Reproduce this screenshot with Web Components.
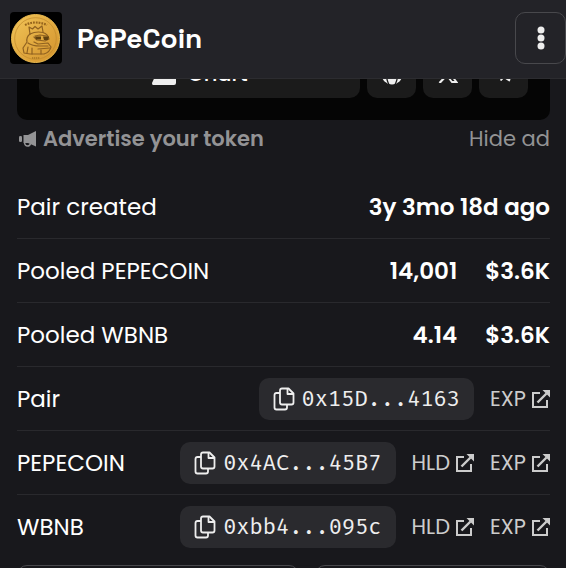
<!DOCTYPE html>
<html lang="en">
<head>
<meta charset="utf-8">
<meta name="viewport" content="width=device-width, initial-scale=1">
<title>PePeCoin</title>
<style>
    html{
        background:#18181c;
    }
    body{
        margin:0;
        color:#fff;
        font-family:Poppins, Inter, sans-serif;
        font-size:23px;
        line-height:32px;
    }
</style>
</head>
<body>
<pair-page>
    <token-header slot="header">PePeCoin</token-header>
    <ad-banner>Chart</ad-banner>
    <ad-note></ad-note>
    <info-row>Pair created<b slot="value">3y 3mo 18d ago</b></info-row>
    <info-row wide>Pooled PEPECOIN<b slot="value">14,001</b><b slot="value">$3.6K</b></info-row>
    <info-row wide>Pooled WBNB<b slot="value">4.14</b><b slot="value">$3.6K</b></info-row>
    <info-row>Pair
        <copy-address slot="value">0x15D...4163</copy-address>
        <out-link slot="value">EXP</out-link>
    </info-row>
    <info-row>PEPECOIN
        <copy-address slot="value">0x4AC...45B7</copy-address>
        <out-link slot="value">HLD</out-link>
        <out-link slot="value">EXP</out-link>
    </info-row>
    <info-row>WBNB
        <copy-address slot="value">0xbb4...095c</copy-address>
        <out-link slot="value">HLD</out-link>
        <out-link slot="value">EXP</out-link>
    </info-row>
    <pair-actions></pair-actions>
</pair-page>

<script>
class BaseElement extends HTMLElement{
    constructor(){
        super()
        this.attachShadow({ mode: "open" });
        const template = document.createElement("template");
        template.innerHTML = this.getStyles() + this.getTemplate();
        this.shadowRoot.appendChild(template.content.cloneNode(true));
    }
}

class PairPage extends BaseElement{
    getTemplate() {
        return `
            <slot name="header"></slot>
            <main><slot></slot></main>
        `;
    }
    getStyles() {
        return `
          <style>
            :host{
                display:flex;
                flex-direction:column;
                height:100vh;
                overflow:hidden;
            }
            main{
                flex:1;
                min-height:0;
                overflow:hidden;
                padding:0 16px 0 17px;
            }
          </style>
        `;
    }
}

class TokenHeader extends BaseElement{
    getTemplate() {
        return `
            <coin-logo></coin-logo>
            <h1><slot></slot></h1>
            <button type="button" aria-label="Menu">
                <svg width="8" height="24" viewBox="0 0 8 24" fill="#eee">
                    <circle cx="4" cy="4" r="3.5"/>
                    <circle cx="4" cy="12" r="3.5"/>
                    <circle cx="4" cy="20" r="3.5"/>
                </svg>
            </button>
        `;
    }
    getStyles() {
        return `
          <style>
            :host{
                display:flex;
                align-items:center;
                padding:12px 0 14px 10px;
                background:#232328;
                border-bottom:1px solid #2c2c30;
            }
            h1{
                flex:1;
                margin:0 0 0 14px;
                font:600 28px/32px "Space Grotesk", Inter, sans-serif;
            }
            button{
                display:flex;
                align-items:center;
                justify-content:center;
                box-sizing:border-box;
                width:51px;
                height:52px;
                padding:0;
                background:none;
                border:1px solid #48484c;
                border-radius:10px;
            }
          </style>
        `;
    }
}

class CoinLogo extends BaseElement{
    getTemplate() {
        return `
            <svg viewBox="0 0 52 52" width="52" height="52">
                <defs>
                    <linearGradient id="gold" x1="0" y1="0" x2="1" y2="1">
                        <stop offset="0" stop-color="#f2c65a"/>
                        <stop offset=".5" stop-color="#e2aa40"/>
                        <stop offset="1" stop-color="#d2922c"/>
                    </linearGradient>
                </defs>
                <rect width="52" height="52" fill="#000"/>
                <circle cx="25.500" cy="26.500" r="24" fill="url(#gold)" stroke="#e9b94f"/>
                <circle cx="25.500" cy="26.500" r="20.800" fill="none" stroke="#c08a2c" stroke-width=".7"/>
                <path d="M15 13 Q25 8 37 13" fill="none" stroke="#96651c" stroke-width="2.200" stroke-dasharray="1.800 1"/>
                <g fill="none" stroke="#8f6120" stroke-width="1.200" stroke-linejoin="round" stroke-linecap="round">
                    <path d="M20 22 L19 15 L22.500 17 L25 14.500 L28 17 L32 14 L33 20"/>
                    <path d="M20 22 Q26 19 33 20.500 Q38 22 39 27 L35 29 L27 28 L24 25"/>
                    <path d="M20 22 Q16 25 17 30 L13 36 L14 41 L20 42 L34 42 Q40 40 41 35 L38 31 L28 32 L24 30"/>
                    <path d="M25 24 L30 23 L37 24 M18 31 Q22 34 30 34 L38 34 M18 35 L17 41 M22 36 L22 42 M28 37 L40 36 M31 38 L31 42"/>
                </g>
                <path d="M25 24.500 l6 0 0 3 -5 0z M33 24.500 l6 0 -1 3.500 -4 0z" fill="#60400f"/>
                <path d="M22 46 H30" stroke="#a87523" stroke-width="1.500" stroke-dasharray="1.300 .7"/>
            </svg>
        `;
    }
    getStyles() {
        return `
          <style>
            :host{
                display:block;
                width:52px;
                height:52px;
                margin-right:1px;
                border-radius:4px;
                overflow:hidden;
            }
            svg{ display:block; }
          </style>
        `;
    }
}

// scrolled up under the header, only its lower edge stays visible
class AdBanner extends BaseElement{
    getTemplate() {
        return `
            <div>
                <button type="button" class="main">
                    <svg width="24" height="22" viewBox="0 0 24 22" fill="#eee"><path d="M0 20 L6 7 L11 12 L18 2 L24 9 V20 Q24 22 22 22 H1 Q0 22 0 20z"/></svg>
                    <slot></slot>
                </button>
                <button type="button" aria-label="Website">
                    <svg width="22" height="22" viewBox="0 0 22 22" fill="none" stroke="#1b1b1b" stroke-width="1.300">
                        <circle cx="11" cy="11" r="10.500" fill="#eee" stroke="none"/>
                        <ellipse cx="11" cy="11" rx="5.500" ry="12.500"/>
                        <path d="M0 7.500 H22 M0 14.500 H22"/>
                    </svg>
                </button>
                <button type="button" aria-label="X">
                    <svg width="20" height="18" viewBox="0 0 20 18" fill="none" stroke="#eee">
                        <path d="M1.500 1 H6 L18.500 17 H14z" stroke-width="1.800"/>
                        <path d="M18 0 L11 8 M8.500 10.500 L1.500 18" stroke-width="2.200"/>
                    </svg>
                </button>
                <button type="button" aria-label="Telegram">
                    <svg width="20" height="16" viewBox="0 0 20 18" fill="#eee"><path d="M0 8 L19 0 Q20 0 20 1 L17 16 Q16.500 18 15 17 L10 13.500 L7 17 Q6 17 6 16 L5 10.500z"/><path d="M6.500 10.500 L16 4 L9 12 L7.500 15z" fill="#1b1b1b"/></svg>
                </button>
            </div>
        `;
    }
    getStyles() {
        return `
          <style>
            :host{
                display:flex;
                align-items:flex-end;
                height:41px;
                overflow:hidden;
            }
            div{
                display:flex;
                flex:1;
                gap:7px;
                padding:22px;
                background:#050505;
                border-radius:10px;
            }
            button{
                display:flex;
                align-items:center;
                justify-content:center;
                gap:12px;
                width:49px;
                height:49px;
                padding:0;
                border:0;
                border-radius:10px;
                background:#1b1b1b;
                color:#fff;
                font:500 21px/32px Poppins, Inter, sans-serif;
            }
            .main{ flex:1; }
          </style>
        `;
    }
}

class AdNote extends BaseElement{
    getTemplate() {
        return `
            <a href="#">
                <svg width="18" height="16" viewBox="0 0 18 16" fill="#939395">
                    <path d="M17 0 V15.500 L9 12 H4.500 V4 H9z"/>
                    <rect x="0" y="5" width="3" height="6" rx="1.300"/>
                    <path d="M5.500 12 Q6 15 8.500 15 Q11 15 11.500 12.500" fill="none" stroke="#939395" stroke-width="1.500"/>
                </svg>
                <b>Advertise your token</b>
            </a>
            <button type="button">Hide ad</button>
        `;
    }
    getStyles() {
        return `
          <style>
            :host{
                display:flex;
                justify-content:space-between;
                padding:3px 0 20px 2px;
                color:#939395;
                font-size:21px;
            }
            a{
                display:flex;
                align-items:center;
                gap:6px;
                color:inherit;
                text-decoration:none;
            }
            b{ font-weight:600; }
            button{
                padding:0;
                border:0;
                background:none;
                color:inherit;
                font:inherit;
            }
          </style>
        `;
    }
}

class InfoRow extends BaseElement{
    getTemplate() {
        return `
            <span><slot></slot></span>
            <div><slot name="value"></slot></div>
        `;
    }
    getStyles() {
        return `
          <style>
            :host{
                display:flex;
                align-items:center;
                justify-content:space-between;
                height:63px;
                border-bottom:1px solid #29292d;
            }
            :host(:last-of-type){ border-color:transparent; }
            div{
                display:flex;
                align-items:center;
                gap:16px;
            }
            :host([wide]) div{ gap:28px; }
            ::slotted(b){ font-weight:600; }
          </style>
        `;
    }
}

class CopyAddress extends BaseElement{
    getTemplate() {
        return `
            <button type="button">
                <svg width="22" height="24" viewBox="0 0 22 24" fill="none" stroke="#eee" stroke-width="1.800" stroke-linejoin="round">
                    <path d="M9 1.500 H15.500 L20.500 6.500 V15.500 Q20.500 17.500 18.500 17.500 H9 Q7 17.500 7 15.500 V3.500 Q7 1.500 9 1.500z"/>
                    <path d="M14.500 2 V7 H20"/>
                    <path d="M7 6 H3.500 Q1.500 6 1.500 8 V20.500 Q1.500 22.500 3.500 22.500 H12 Q14 22.500 14 20.500 V18"/>
                </svg>
                <slot></slot>
            </button>
        `;
    }
    getStyles() {
        return `
          <style>
            :host{ display:block; }
            button{
                display:flex;
                align-items:center;
                gap:7px;
                height:42px;
                padding:0 14px;
                border:0;
                border-radius:10px;
                background:#2a2a2e;
                color:#eee;
                font:22px/32px "Fira Mono", "DejaVu Sans Mono", monospace;
            }
          </style>
        `;
    }
}

class OutLink extends BaseElement{
    getTemplate() {
        return `
            <a href="#">
                <slot></slot>
                <svg width="18" height="18" viewBox="0 0 18 18" fill="none" stroke="#ccc" stroke-width="2">
                    <path d="M8 3 H1 V17 H15 V10"/>
                    <path d="M5.500 12.500 L14.500 3.500" stroke-width="2.400"/>
                    <path d="M10.500 0 H18 V7.500z" fill="#ccc" stroke="none"/>
                </svg>
            </a>
        `;
    }
    getStyles() {
        return `
          <style>
            :host{ display:block; }
            a{
                display:flex;
                align-items:center;
                gap:6px;
                color:#ccc;
                font-size:21px;
                text-decoration:none;
            }
          </style>
        `;
    }
}

class PairActions extends BaseElement{
    getTemplate() {
        return `
            <button type="button"></button>
            <button type="button"></button>
        `;
    }
    getStyles() {
        return `
          <style>
            :host{
                display:grid;
                grid-template-columns:6fr 5fr;
                gap:16px;
                padding:6px 0 16px;
            }
            button{
                height:48px;
                border:1px solid #48484c;
                border-radius:10px;
                background:none;
            }
          </style>
        `;
    }
}

customElements.define("pair-page", PairPage);
customElements.define("coin-logo", CoinLogo);
customElements.define("token-header", TokenHeader);
customElements.define("ad-banner", AdBanner);
customElements.define("ad-note", AdNote);
customElements.define("info-row", InfoRow);
customElements.define("copy-address", CopyAddress);
customElements.define("out-link", OutLink);
customElements.define("pair-actions", PairActions);
</script>
</body>
</html>
